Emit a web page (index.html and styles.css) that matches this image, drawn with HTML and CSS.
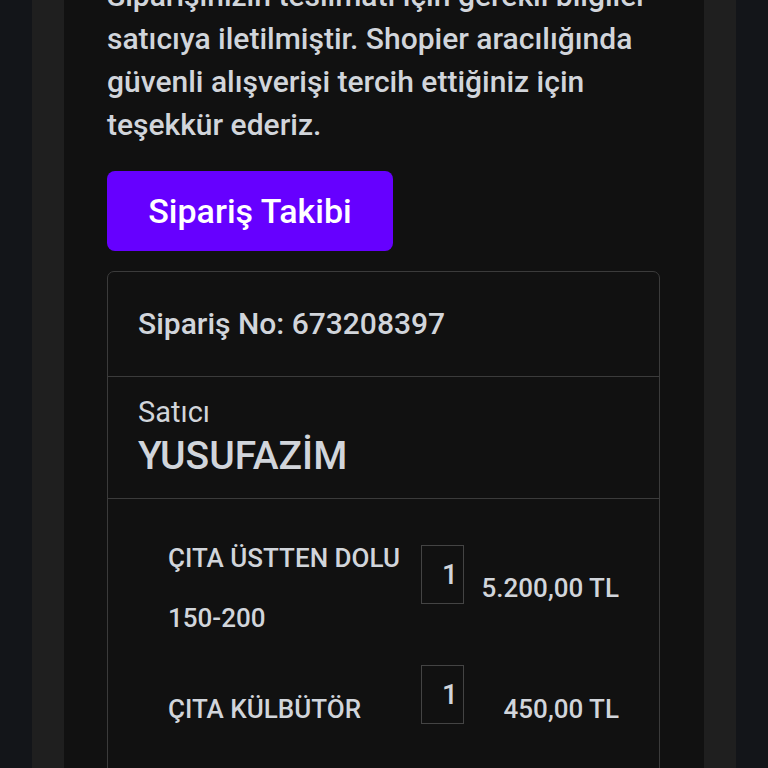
FILE: index.html
```html
<!DOCTYPE html>
<html lang="tr">
<head>
<meta charset="utf-8">
<title>Sipariş</title>
<link rel="stylesheet" href="styles.css">
</head>
<body>
<div class="frame">
  <div class="band">
    <main class="panel">
      <p class="intro">Siparişinizin teslimatı için gerekli bilgiler satıcıya iletilmiştir. Shopier aracılığında güvenli alışverişi tercih ettiğiniz için teşekkür ederiz.</p>
      <a class="track-btn" href="#">Sipariş Takibi</a>
      <section class="card">
        <div class="card-row order-no">Sipariş No: 673208397</div>
        <div class="card-row seller">
          <div class="seller-label">Satıcı</div>
          <div class="seller-name">YUSUFAZİM</div>
        </div>
        <div class="card-row items">
          <div class="item">
            <div class="item-name">ÇITA ÜSTTEN DOLU 150-200</div>
            <div class="item-qty"><span>1</span></div>
            <div class="item-price">5.200,00 TL</div>
          </div>
          <div class="item">
            <div class="item-name">ÇITA KÜLBÜTÖR</div>
            <div class="item-qty"><span>1</span></div>
            <div class="item-price">450,00 TL</div>
          </div>
        </div>
      </section>
    </main>
  </div>
</div>
</body>
</html>
```

FILE: styles.css
```css
html, body {
  margin: 0;
  padding: 0;
  background: #131519;
  height: 100%;
  overflow: hidden;
}
body {
  font-family: Roboto, "Liberation Sans", sans-serif;
  color: #d1d5db;
}
.frame {
  padding: 0 32px;
  height: 100%;
}
.band {
  background: #1f1f1f;
  padding: 0 32px;
  height: 100%;
}
.panel {
  display: flow-root;
  background: #111111;
  height: 100%;
  overflow: hidden;
  padding: 0 44px 0 43px;
  box-sizing: border-box;
}
.intro {
  margin: -26px 0 0;
  font-size: 30px;
  line-height: 43px;
  font-weight: 500;
  width: 552px;
}
.track-btn {
  display: inline-flex;
  align-items: center;
  justify-content: center;
  margin-top: 25px;
  width: 286px;
  height: 80px;
  background: #6600ff;
  border-radius: 8px;
  color: #ffffff;
  text-decoration: none;
  font-size: 34px;
  font-weight: 500;
}
.card {
  margin-top: 20px;
  border: 1px solid #3b3b3b;
  border-radius: 7px;
}
.card-row + .card-row {
  border-top: 1px solid #3b3b3b;
}
.order-no {
  padding: 32px 30px;
  font-size: 30px;
  line-height: 40px;
  font-weight: 500;
}
.seller {
  padding: 18px 30px 17px;
}
.seller-label {
  font-size: 29px;
  line-height: 34px;
}
.seller-name {
  margin-top: 3px;
  font-size: 39px;
  line-height: 49px;
  font-weight: 500;
}
.items {
  padding: 29px 40px 40px 60px;
  display: flex;
  flex-direction: column;
  gap: 17px;
}
.item {
  display: grid;
  grid-template-columns: 253px 43px 1fr;
  align-items: center;
}
.item-name {
  font-size: 26px;
  line-height: 60px;
  font-weight: 500;
  padding-right: 10px;
}
.item-qty {
  box-sizing: border-box;
  width: 43px;
  height: 59px;
  border: 1px solid #444444;
  margin-bottom: 28px;
  display: flex;
  align-items: center;
  justify-content: flex-end;
  padding-right: 5px;
  font-size: 28px;
  font-weight: 500;
}
.item-price {
  text-align: right;
  font-size: 26px;
  font-weight: 500;
}
```
